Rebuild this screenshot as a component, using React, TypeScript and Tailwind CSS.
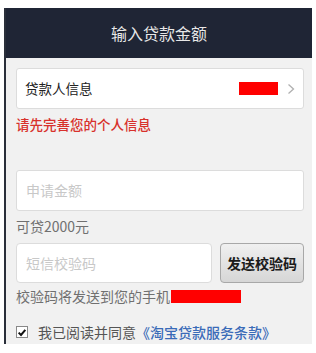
const font = { fontFamily: '"Noto Sans CJK SC", "Noto Sans", sans-serif' }

export default function App() {
    return (
        <div className="w-[316px] h-[353px] bg-white pt-[8px] pl-[4px]" style={font}>
            <div className="w-[308px] h-[336px] border-l-2 border-[#2a2f3a] bg-[#f1f1f1] flex flex-col">
                {/* 标题栏 */}
                <div className="h-[50px] bg-[#1f2535] flex items-center justify-center text-[16px] text-[#e8e8e8]">
                    输入贷款金额
                </div>

                <div className="flex flex-col pl-[10px] pr-[8px]">
                    {/* 贷款人信息 */}
                    <div className="mt-[10px] h-[41px] bg-white border border-[#dcdcdc] rounded-[3px] flex items-center pl-[8px] pr-[8px]">
                        <span className="text-[13.5px] text-[#222]">贷款人信息</span>
                        <span className="ml-auto w-[39px] h-[13px] bg-[#ff0000]" />
                        <svg viewBox="0 0 8 12" className="ml-[9px] w-[8px] h-[12px]">
                            <path d="M1.5 1.5 L6.5 6 L1.5 10.5" fill="none" stroke="#b0b0b0" strokeWidth="1.3" />
                        </svg>
                    </div>
                    <div className="mt-[5px] text-[13.5px] leading-[20px] text-[#d8312c] font-medium">请先完善您的个人信息</div>

                    {/* 申请金额 */}
                    <div className="mt-[36px] h-[41px] bg-white border border-[#dcdcdc] rounded-[3px] flex items-center pl-[9px] text-[14px] text-[#c8c8c8]">
                        申请金额
                    </div>
                    <div className="mt-[5px] text-[14px] leading-[20px] text-[#707070]">可贷2000元</div>

                    {/* 短信校验码 */}
                    <div className="mt-[7px] flex gap-[8px]">
                        <div className="w-[196px] h-[40px] bg-white border border-[#dcdcdc] rounded-[4px] flex items-center pl-[9px] text-[14px] text-[#c8c8c8]">
                            短信校验码
                        </div>
                        <div className="flex-1 h-[40px] rounded-[4px] border border-[#a8a8a8] bg-gradient-to-b from-[#f0f0f0] to-[#d6d6d6] flex items-center justify-center text-[14px] text-[#1a1a1a] font-semibold">
                            发送校验码
                        </div>
                    </div>
                    <div className="mt-[3px] flex items-center text-[14px] leading-[20px] text-[#707070]">
                        <span>校验码将发送到您的手机</span>
                        <span className="ml-[1px] w-[70px] h-[13px] bg-[#ff0000]" />
                    </div>

                    {/* 同意条款 */}
                    <div className="mt-[16px] flex items-center text-[14px] leading-[20px]">
                        <span className="w-[12px] h-[12px] border border-[#888] bg-white flex items-center justify-center">
                            <svg viewBox="0 0 12 12" className="w-[11px] h-[11px]">
                                <path d="M2 6.2 L4.8 9 L10 2.8" fill="none" stroke="#111" strokeWidth="2.4" />
                            </svg>
                        </span>
                        <span className="ml-[10px] text-[#555]">我已阅读并同意</span>
                        <span className="text-[#3a6bb8] font-medium">《淘宝贷款服务条款》</span>
                    </div>
                </div>
            </div>
        </div>
    )
}
